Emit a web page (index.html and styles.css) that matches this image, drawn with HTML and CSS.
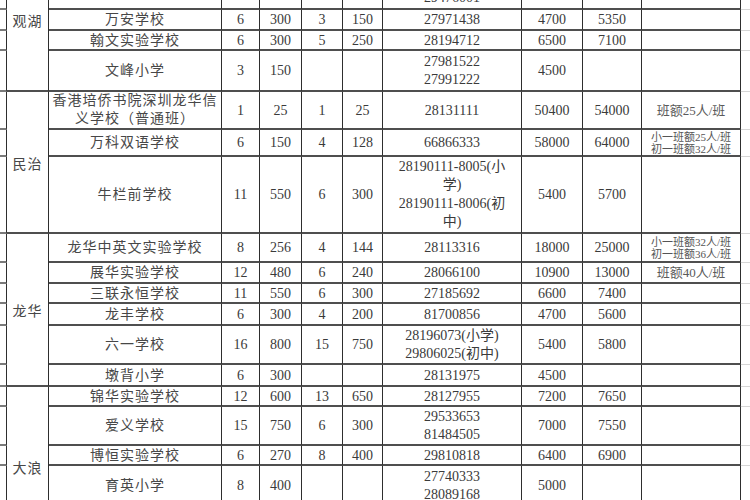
FILE: index.html
```html
<!DOCTYPE html>
<html lang="zh-CN">
<head>
<meta charset="utf-8">
<title>学校收费表</title>
<link rel="stylesheet" href="styles.css">
</head>
<body>
<table class="sheet">
<colgroup>
<col class="w-stub"><col class="w-dist"><col class="w-name"><col class="w-c1"><col class="w-c2"><col class="w-c3"><col class="w-c4"><col class="w-phone"><col class="w-fee1"><col class="w-fee2"><col class="w-note"><col class="w-ext">
</colgroup>
<tbody>
<tr class="h20"><td class="stub"></td><td class="dist" rowspan="5">观湖</td><td class="name"></td><td></td><td></td><td></td><td></td><td></td><td></td><td></td><td></td><td class="ext"></td></tr>
<tr class="h41"><td class="stub"></td><td class="name"></td><td></td><td></td><td></td><td></td><td class="two"><br>29476001</td><td></td><td></td><td></td><td class="ext"></td></tr>
<tr class="h21"><td class="stub"></td><td class="name">万安学校</td><td>6</td><td>300</td><td>3</td><td>150</td><td>27971438</td><td>4700</td><td>5350</td><td></td><td class="ext"></td></tr>
<tr class="h20"><td class="stub"></td><td class="name">翰文实验学校</td><td>6</td><td>300</td><td>5</td><td>250</td><td>28194712</td><td>6500</td><td>7100</td><td></td><td class="ext"></td></tr>
<tr class="h41"><td class="stub"></td><td class="name">文峰小学</td><td>3</td><td>150</td><td></td><td></td><td class="two">27981522<br>27991222</td><td>4500</td><td></td><td></td><td class="ext"></td></tr>

<tr class="h38"><td class="stub"></td><td class="dist" rowspan="3">民治</td><td class="name two">香港培侨书院深圳龙华信<br>义学校（普通班）</td><td>1</td><td>25</td><td>1</td><td>25</td><td>28131111</td><td>50400</td><td>54000</td><td class="note">班额25人/班</td><td class="ext"></td></tr>
<tr class="h27"><td class="stub"></td><td class="name">万科双语学校</td><td>6</td><td>150</td><td>4</td><td>128</td><td>66866333</td><td>58000</td><td>64000</td><td class="note2">小一班额25人/班<br>初一班额32人/班</td><td class="ext"></td></tr>
<tr class="h77"><td class="stub"></td><td class="name">牛栏前学校</td><td>11</td><td>550</td><td>6</td><td>300</td><td class="four">28190111-8005(小<br>学)<br>28190111-8006(初<br>中)</td><td>5400</td><td>5700</td><td></td><td class="ext"></td></tr>

<tr class="h29"><td class="stub"></td><td class="dist" rowspan="6">龙华</td><td class="name">龙华中英文实验学校</td><td>8</td><td>256</td><td>4</td><td>144</td><td>28113316</td><td>18000</td><td>25000</td><td class="note2">小一班额32人/班<br>初一班额36人/班</td><td class="ext"></td></tr>
<tr class="h21"><td class="stub"></td><td class="name">展华实验学校</td><td>12</td><td>480</td><td>6</td><td>240</td><td>28066100</td><td>10900</td><td>13000</td><td class="note">班额40人/班</td><td class="ext"></td></tr>
<tr class="h20"><td class="stub"></td><td class="name">三联永恒学校</td><td>11</td><td>550</td><td>6</td><td>300</td><td>27185692</td><td>6600</td><td>7400</td><td></td><td class="ext"></td></tr>
<tr class="h22"><td class="stub"></td><td class="name">龙丰学校</td><td>6</td><td>300</td><td>4</td><td>200</td><td>81700856</td><td>4700</td><td>5600</td><td></td><td class="ext"></td></tr>
<tr class="h39"><td class="stub"></td><td class="name">六一学校</td><td>16</td><td>800</td><td>15</td><td>750</td><td class="two">28196073(小学)<br>29806025(初中)</td><td>5400</td><td>5800</td><td></td><td class="ext"></td></tr>
<tr class="h22"><td class="stub"></td><td class="name">墩背小学</td><td>6</td><td>300</td><td></td><td></td><td>28131975</td><td>4500</td><td></td><td></td><td class="ext"></td></tr>

<tr class="h20"><td class="stub"></td><td class="dist" rowspan="5">大浪</td><td class="name">锦华实验学校</td><td>12</td><td>600</td><td>13</td><td>650</td><td>28127955</td><td>7200</td><td>7650</td><td></td><td class="ext"></td></tr>
<tr class="h39"><td class="stub"></td><td class="name">爱义学校</td><td>15</td><td>750</td><td>6</td><td>300</td><td class="two">29533653<br>81484505</td><td>7000</td><td>7550</td><td></td><td class="ext"></td></tr>
<tr class="h20"><td class="stub"></td><td class="name">博恒实验学校</td><td>6</td><td>270</td><td>8</td><td>400</td><td>29810818</td><td>6400</td><td>6900</td><td></td><td class="ext"></td></tr>
<tr class="h41"><td class="stub"></td><td class="name">育英小学</td><td>8</td><td>400</td><td></td><td></td><td class="two">27740333<br>28089168</td><td>5000</td><td></td><td></td><td class="ext"></td></tr>
<tr class="h40"><td class="stub"></td><td class="name"></td><td></td><td></td><td></td><td></td><td></td><td></td><td></td><td></td><td class="ext"></td></tr>
</tbody>
</table>
</body>
</html>
```
FILE: styles.css
```css
html, body {
  margin: 0;
  padding: 0;
  background: #fff;
  width: 750px;
  height: 500px;
  overflow: hidden;
}

.sheet {
  border-collapse: separate;
  border-spacing: 0;
  table-layout: fixed;
  width: 781px;
  margin-top: -51px;
  font-family: "Liberation Serif", "Noto Sans CJK SC", serif;
  font-size: 14px;
  color: #3a3a3a;
}

.w-stub { width: 7px; }
.w-dist { width: 42px; }
.w-name { width: 173px; }
.w-c1 { width: 38px; }
.w-c2 { width: 42px; }
.w-c3 { width: 41px; }
.w-c4 { width: 40px; }
.w-phone { width: 139px; }
.w-fee1 { width: 61px; }
.w-fee2 { width: 59px; }
.w-note { width: 99px; }
.w-ext { width: 40px; }

.h20 { height: 20px; }
.h21 { height: 21px; }
.h22 { height: 22px; }
.h27 { height: 27px; }
.h29 { height: 29px; }
.h38 { height: 38px; }
.h39 { height: 39px; }
.h40 { height: 40px; }
.h41 { height: 41px; }
.h77 { height: 77px; }

.sheet td {
  padding: 0;
  text-align: center;
  vertical-align: middle;
  border-right: 1px solid #2e2e2e;
  border-bottom: 2px solid #4f4f4f;
  line-height: 17px;
  white-space: nowrap;
  overflow: hidden;
}

.sheet td.stub {
  border-bottom-color: #7a7a7a;
}

.sheet td.ext {
  border-right: 0;
  border-bottom: 1px solid #d6d6d6;
}

.sheet td.name,
.sheet td.dist {
  letter-spacing: 1px;
  color: #474747;
}

.sheet td.dist {
  padding-top: 4px;
}

.sheet td.two { line-height: 18px; }
.sheet td.four { line-height: 18.5px; }

.sheet td.note {
  font-size: 13px;
  color: #5a5a5a;
}

.sheet td.note2 {
  font-size: 11px;
  line-height: 12px;
  color: #555;
}
```
